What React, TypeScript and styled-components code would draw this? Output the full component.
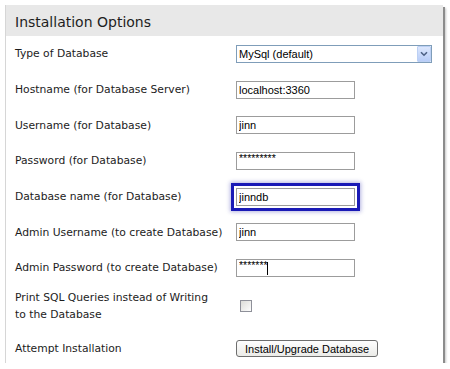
import React from "react";
import styled, { createGlobalStyle } from "styled-components";

const GlobalStyle = createGlobalStyle`
  html, body { margin: 0; padding: 0; background: #ffffff; }
  body { font-family: "DejaVu Sans", Verdana, sans-serif; }
`;

const Panel = styled.section`
  margin: 5px 0 0 5px;
  width: 438px;
  box-sizing: border-box;
  background: #ffffff;
  border-left: 1px solid #d6d6d6;
  box-shadow: 2px 2px 0 #8c8c8c, 3px 3px 2px rgba(0, 0, 0, 0.22);
`;

const Header = styled.h2`
  margin: 0;
  height: 31px;
  box-sizing: border-box;
  padding: 3px 9px 0;
  background: #e8e8e8;
  display: flex;
  align-items: center;
  font: 400 14px "DejaVu Sans", Verdana, sans-serif;
  color: #1e1e1e;
`;

const Row = styled.div<{ $h: number; $bottom?: boolean }>`
  display: grid;
  grid-template-columns: 221px 1fr;
  align-items: ${(p) => (p.$bottom ? "end" : "center")};
  height: ${(p) => p.$h}px;
  box-sizing: border-box;
  padding: 0 0 ${(p) => (p.$bottom ? 6 : 0)}px 9px;
`;

const Label = styled.label`
  font-size: 10.75px;
  line-height: 17px;
  color: #1c1c1c;
`;

const Control = styled.div`
  display: flex;
  align-items: center;
`;

const FieldWrap = styled.span`
  position: relative;
  display: inline-block;
  line-height: 0;
`;

const TextInput = styled.input<{ $focused?: boolean }>`
  width: 119px;
  height: 18px;
  box-sizing: border-box;
  margin: 0;
  padding: 0 2px;
  border: 1px solid #9c9c9c;
  background: #ffffff;
  font: 11px "Liberation Sans", Arial, sans-serif;
  color: #000000;
  outline: ${(p) => (p.$focused ? "3px solid #1a1ab6" : "none")};
  outline-offset: 2px;
  box-shadow: ${(p) =>
    p.$focused ? "0 0 0 5px #ffffff, 0 0 4px 6px rgba(40, 40, 170, 0.35)" : "none"};
`;

const PasswordInput = styled(TextInput)`
  font-size: 10.5px;
  padding-bottom: 5px;
`;

const Caret = styled.span<{ $left: number }>`
  position: absolute;
  left: ${(p) => p.$left}px;
  top: 3px;
  bottom: 2px;
  width: 1px;
  background: #000000;
`;

const SelectWrap = styled.span`
  position: relative;
  display: inline-block;
  line-height: 0;
`;

const Select = styled.select`
  appearance: none;
  -webkit-appearance: none;
  width: 196px;
  height: 18px;
  box-sizing: border-box;
  margin: 0;
  padding: 0 0 0 2px;
  border: 1px solid #7f9db9;
  border-radius: 0;
  background: #ffffff;
  font: 11px "Liberation Sans", Arial, sans-serif;
  color: #000000;
  outline: none;
`;

const SelectArrow = styled.span`
  position: absolute;
  top: 1px;
  right: 1px;
  width: 14px;
  height: 16px;
  box-sizing: border-box;
  border: 1px solid #bcd0f4;
  border-radius: 1px;
  background: linear-gradient(#dce7fd, #b8cdf8);
  display: flex;
  align-items: center;
  justify-content: center;
  pointer-events: none;
`;

const Checkbox = styled.input`
  appearance: none;
  -webkit-appearance: none;
  margin: 0 0 0 4px;
  width: 12px;
  height: 12px;
  box-sizing: border-box;
  border: 1px solid #8e9099;
  background: linear-gradient(135deg, #dcdcd8, #fdfdfd);
`;

const Button = styled.button`
  margin: 0;
  height: 17px;
  box-sizing: border-box;
  padding: 0 8px;
  border: 1px solid #6e6e6e;
  border-radius: 3px;
  background: linear-gradient(#fefefe, #ebebe8);
  font: 11px "Liberation Sans", Arial, sans-serif;
  color: #000000;
  line-height: 14px;
`;

const ROW = 35.7;

export default function App() {
  return (
    <>
      <GlobalStyle />
      <Panel>
        <Header>Installation Options</Header>
        <Row $h={ROW}>
          <Label>Type of Database</Label>
          <Control>
            <SelectWrap>
              <Select defaultValue="mysql">
                <option value="mysql">MySql (default)</option>
              </Select>
              <SelectArrow>
                <svg width="8" height="6" viewBox="0 0 8 6">
                  <path d="M1 1.2 L4 4.2 L7 1.2" fill="none" stroke="#4d6185" strokeWidth="1.6" />
                </svg>
              </SelectArrow>
            </SelectWrap>
          </Control>
        </Row>
        <Row $h={ROW}>
          <Label>Hostname (for Database Server)</Label>
          <Control>
            <TextInput readOnly value="localhost:3360" />
          </Control>
        </Row>
        <Row $h={ROW}>
          <Label>Username (for Database)</Label>
          <Control>
            <TextInput readOnly value="jinn" />
          </Control>
        </Row>
        <Row $h={ROW}>
          <Label>Password (for Database)</Label>
          <Control>
            <PasswordInput readOnly value="*********" />
          </Control>
        </Row>
        <Row $h={ROW}>
          <Label>Database name (for Database)</Label>
          <Control>
            <TextInput readOnly $focused value="jinndb" />
          </Control>
        </Row>
        <Row $h={ROW}>
          <Label>Admin Username (to create Database)</Label>
          <Control>
            <TextInput readOnly value="jinn" />
          </Control>
        </Row>
        <Row $h={ROW}>
          <Label>Admin Password (to create Database)</Label>
          <Control>
            <FieldWrap>
              <PasswordInput readOnly value="*******" />
              <Caret $left={31} />
            </FieldWrap>
          </Control>
        </Row>
        <Row $h={40.3}>
          <Label>
            Print SQL Queries instead of Writing
            <br />
            to the Database
          </Label>
          <Control>
            <Checkbox type="checkbox" />
          </Control>
        </Row>
        <Row $h={37} $bottom>
          <Label>Attempt Installation</Label>
          <Control>
            <Button type="button">Install/Upgrade Database</Button>
          </Control>
        </Row>
      </Panel>
    </>
  );
}
